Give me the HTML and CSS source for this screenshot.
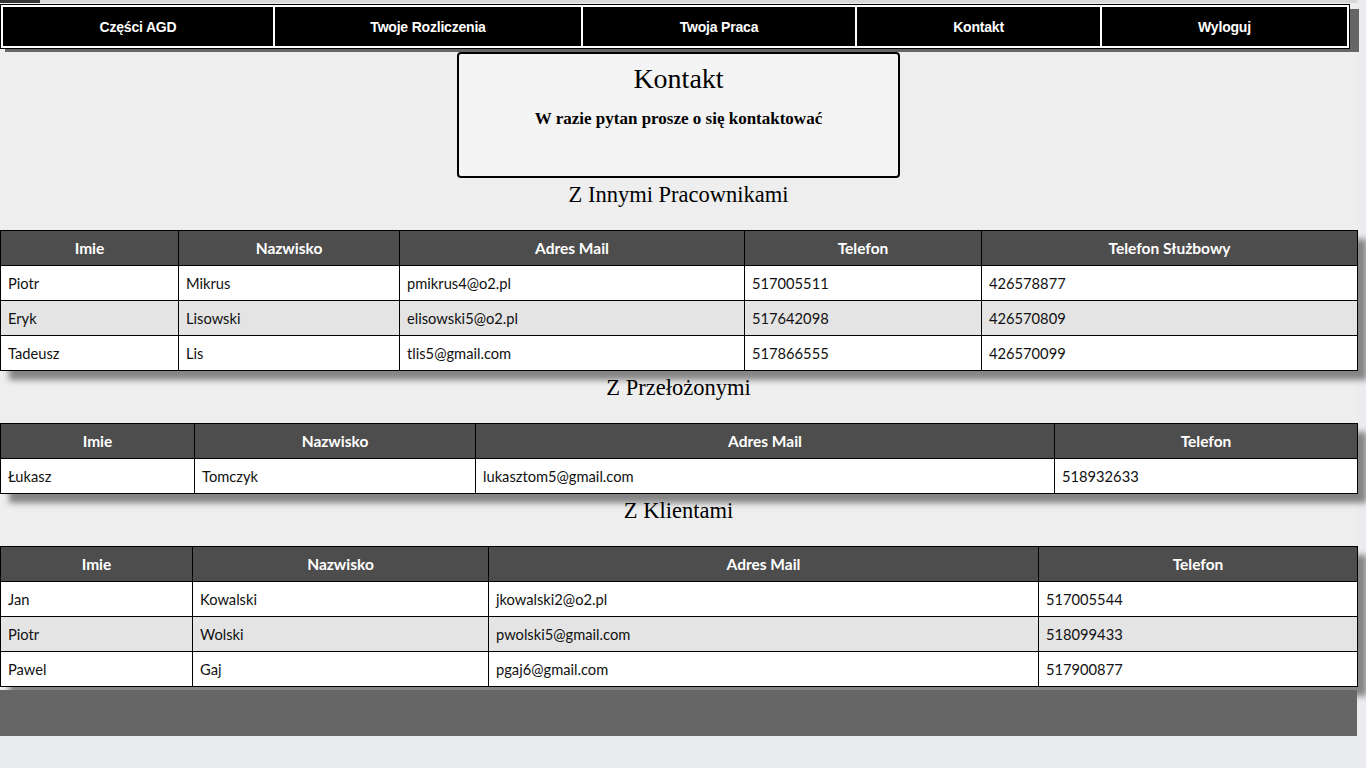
FILE: index.html
```html
<!DOCTYPE html>
<html lang="pl">
<head>
<meta charset="utf-8">
<title>Kontakt</title>
<link rel="stylesheet" href="styles.css">
</head>
<body>
<div class="page">
  <div class="topline"></div>
  <nav class="nav-wrap">
    <table class="nav">
      <colgroup><col class="n1"><col class="n2"><col class="n3"><col class="n4"><col class="n5"></colgroup>
      <tr>
        <td>Części AGD</td>
        <td>Twoje Rozliczenia</td>
        <td>Twoja Praca</td>
        <td>Kontakt</td>
        <td>Wyloguj</td>
      </tr>
    </table>
  </nav>

  <section class="box">
    <h1>Kontakt</h1>
    <p>W razie pytan prosze o się kontaktować</p>
  </section>

  <h2 class="sec">Z Innymi Pracownikami</h2>
  <table class="data t1">
    <colgroup><col class="a1"><col class="a2"><col class="a3"><col class="a4"><col class="a5"></colgroup>
    <tr><th>Imie</th><th>Nazwisko</th><th>Adres Mail</th><th>Telefon</th><th>Telefon Służbowy</th></tr>
    <tr><td>Piotr</td><td>Mikrus</td><td>pmikrus4@o2.pl</td><td>517005511</td><td>426578877</td></tr>
    <tr class="alt"><td>Eryk</td><td>Lisowski</td><td>elisowski5@o2.pl</td><td>517642098</td><td>426570809</td></tr>
    <tr><td>Tadeusz</td><td>Lis</td><td>tlis5@gmail.com</td><td>517866555</td><td>426570099</td></tr>
  </table>

  <h2 class="sec">Z Przełożonymi</h2>
  <table class="data t2">
    <colgroup><col class="b1"><col class="b2"><col class="b3"><col class="b4"></colgroup>
    <tr><th>Imie</th><th>Nazwisko</th><th>Adres Mail</th><th>Telefon</th></tr>
    <tr><td>Łukasz</td><td>Tomczyk</td><td>lukasztom5@gmail.com</td><td>518932633</td></tr>
  </table>

  <h2 class="sec">Z Klientami</h2>
  <table class="data t3">
    <colgroup><col class="c1"><col class="c2"><col class="c3"><col class="c4"></colgroup>
    <tr><th>Imie</th><th>Nazwisko</th><th>Adres Mail</th><th>Telefon</th></tr>
    <tr><td>Jan</td><td>Kowalski</td><td>jkowalski2@o2.pl</td><td>517005544</td></tr>
    <tr class="alt"><td>Piotr</td><td>Wolski</td><td>pwolski5@gmail.com</td><td>518099433</td></tr>
    <tr><td>Pawel</td><td>Gaj</td><td>pgaj6@gmail.com</td><td>517900877</td></tr>
  </table>

  <footer class="footer"></footer>
</div>
</body>
</html>
```

FILE: styles.css
```css
html {
  background: #ebecf0;
}
body {
  margin: 0;
  font-family: "Liberation Sans", Arial, sans-serif;
}
.page {
  width: 1357px;
  background: #eeeeee;
}
.topline {
  height: 3px;
  background: linear-gradient(to right, #333 0, #333 40px, #d8d8d8 40px, #d8d8d8 100%);
}
.nav-wrap {
  margin-top: 2px;
  padding-left: 1px;
}
.nav {
  width: 1346px;
  height: 43px;
  table-layout: fixed;
  border-collapse: separate;
  border-spacing: 0;
  background: #000;
  border: 2px solid #fff;
  outline: 1px solid #000;
  box-shadow: 10px 4px 0 0 #666, 4px 4px 0 0 #666;
}
.nav td {
  color: #fff;
  font-weight: bold;
  font-size: 14px;
  text-align: center;
  padding: 0;
  border-left: 2px solid #fff;
  letter-spacing: -0.2px;
}
.nav td:first-child {
  border-left: 0;
}
.n1 { width: 270px; }
.n2 { width: 308px; }
.n3 { width: 274px; }
.n4 { width: 245px; }
.n5 { width: 247px; }

.box {
  width: 439px;
  height: 122px;
  margin: 4px 0 0 457px;
  border: 2px solid #000;
  border-radius: 4px;
  background: #f4f4f4;
  text-align: center;
  font-family: "Liberation Serif", "Times New Roman", serif;
}
.box h1 {
  margin: 7px 0 0;
  font-size: 28px;
  font-weight: normal;
  line-height: 36px;
}
.box p {
  margin: 11px 0 0;
  font-size: 17px;
  font-weight: bold;
  line-height: 22px;
}
.sec {
  margin: 4px 0 22px;
  font-family: "Liberation Serif", "Times New Roman", serif;
  font-size: 22.5px;
  font-weight: normal;
  line-height: 26px;
  text-align: center;
  color: #000;
}
.data {
  width: 1357px;
  table-layout: fixed;
  border-collapse: collapse;
  font-family: Lato, "Open Sans", sans-serif;
  font-size: 14.7px;
  background: #fff;
  box-shadow: 9px 9px 6px #858585;
}
.data th,
.data td {
  border: 1px solid #000;
  height: 35px;
  padding: 0 7px;
  box-sizing: border-box;
}
.data th {
  background: #4d4d4d;
  color: #fff;
  font-weight: bold;
  font-size: 15.5px;
  text-align: center;
}
.data td {
  color: #111;
  text-align: left;
}
.data tr.alt td {
  background: #e4e4e4;
}
.a1 { width: 178px; }
.a2 { width: 221px; }
.a3 { width: 345px; }
.a4 { width: 237px; }
.a5 { width: 376px; }
.b1 { width: 194px; }
.b2 { width: 281px; }
.b3 { width: 579px; }
.b4 { width: 303px; }
.c1 { width: 192px; }
.c2 { width: 296px; }
.c3 { width: 550px; }
.c4 { width: 319px; }

.footer {
  margin-top: 3px;
  height: 46px;
  background: #666;
}
```
